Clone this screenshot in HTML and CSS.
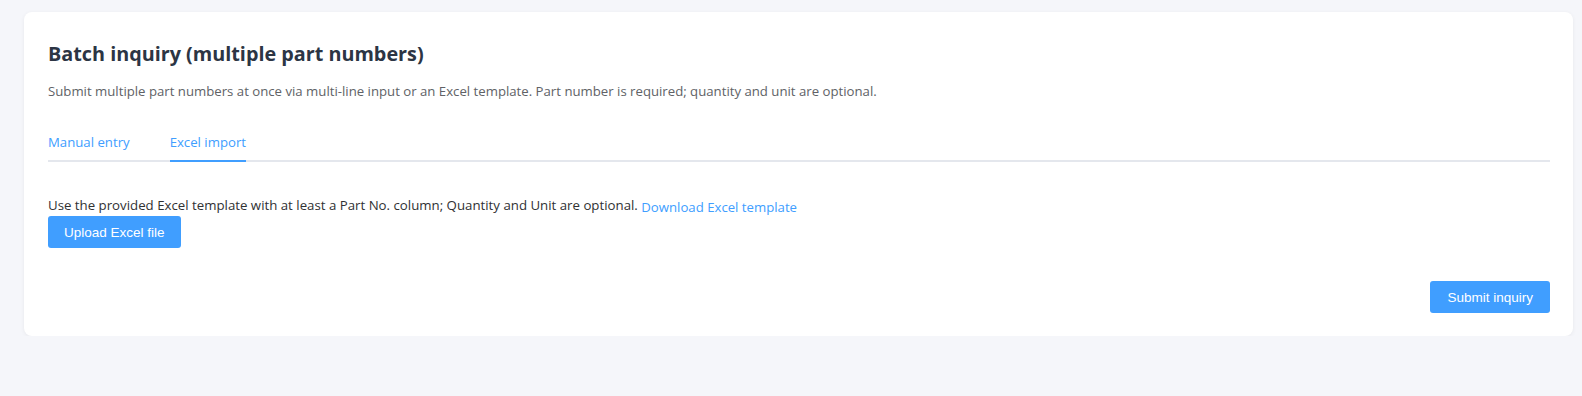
FILE: index.html
```html
<!DOCTYPE html>
<html lang="en">
  <head>
    <meta charset="utf-8" />
    <title>Batch inquiry</title>
    <link rel="stylesheet" href="styles.css">
  </head>
  <body>
    <div class="page">
      <div class="card">
        <h2 class="title">Batch inquiry (multiple part numbers)</h2>
        <p class="subtitle">Submit multiple part numbers at once via multi-line input or an Excel template. Part number is required; quantity and unit are optional.</p>

        <!-- tabs -->
        <div class="tabs">
          <div class="tab">Manual entry</div>
          <div class="tab active">Excel import</div>
        </div>

        <div class="pane">
          <div class="hint">
            Use the provided Excel template with at least a Part No. column; Quantity and Unit are optional.
            <a class="link" href="#">Download Excel template</a>
          </div>
          <button class="btn" type="button">Upload Excel file</button>
        </div>

        <div class="footer">
          <button class="btn submit" type="button">Submit inquiry</button>
        </div>
      </div>
    </div>
  </body>
</html>
```
FILE: styles.css
```css
body {
  margin: 0;
  background-color: #f5f6fa;
  font-family: "Open Sans", "Noto Sans", Arial, sans-serif;
  color: #303133;
}

.page {
  padding: 12px 9px 0 24px;
}

.card {
  background-color: #ffffff;
  border-radius: 8px;
  box-shadow: 0 1px 4px rgba(0, 0, 0, 0.06);
  padding: 28px 23px 23px 24px;
}

.title {
  margin: 0;
  font-size: 19.8px;
  line-height: 28px;
  font-weight: 700;
  color: #2c3544;
}

.subtitle {
  margin: 14px 0 0 0;
  font-size: 13.2px;
  line-height: 18px;
  color: #606266;
}

.tabs {
  display: flex;
  margin-top: 23px;
  height: 37px;
  border-bottom: 2px solid #e4e7ed;
}

.tab {
  padding: 0 20px;
  font-size: 13.2px;
  line-height: 38px;
  color: #409eff;
  position: relative;
}

.tab:first-child {padding-left: 0;}
.tab:last-child {padding-right: 0;}

.tab.active::after {
  content: "";
  position: absolute;
  left: 0;
  right: 0;
  top: 37px;
  height: 2px;
  background-color: #409eff;
}

.tab:nth-child(2).active::after {left: 20px;}

.pane {
  padding-top: 33px;
}

.hint {
  font-size: 13.25px;
  line-height: 21px;
  color: #303133;
}

.link {
  color: #409eff;
  text-decoration: none;
  font-size: 13.2px;
  position: relative;
  top: 2px;
}

.btn {
  height: 32px;
  padding: 0 16px;
  border: none;
  border-radius: 3px;
  background-color: #409eff;
  color: #ffffff;
  font-family: "Liberation Sans", Arial, sans-serif;
  font-size: 13.5px;
}

.btn.submit {padding: 0 17px;}

.footer {
  display: flex;
  justify-content: flex-end;
  margin-top: 33px;
}
```
